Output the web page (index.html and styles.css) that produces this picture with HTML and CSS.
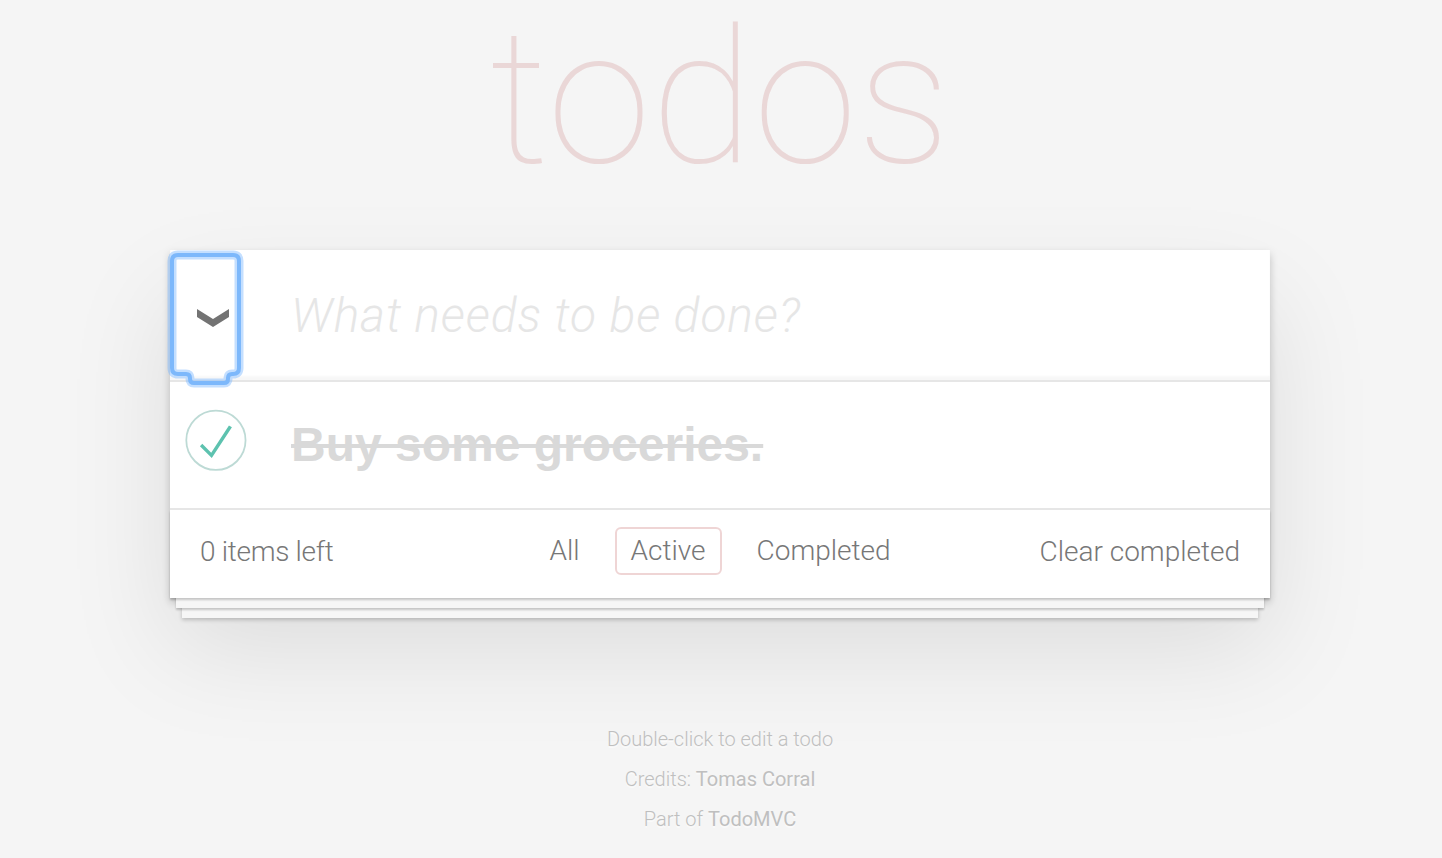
FILE: index.html
```html
<!DOCTYPE html>
<html lang="en">
<head>
<meta charset="utf-8">
<title>Backbone.js • TodoMVC</title>
<link rel="stylesheet" href="styles.css">
</head>
<body>
<div class="page">
  <h1 class="title">todos</h1>
  <section class="todoapp">
    <header class="new-row">
      <div class="toggle-all">
        <svg class="chevron" width="32" height="20" viewBox="0 0 32 20"><polygon points="0,1 16,11 32,1 32,9 16,19 0,9" fill="#737373"/></svg>
      </div>
      <input class="new-todo" placeholder="What needs to be done?">
      <svg class="focus-ring" width="84" height="142" viewBox="0 0 84 142">
        <path d="M13,7 H68 Q74,7 74,13 V120 Q74,126 68,126 H67 Q63,126 63,130 V131 Q63,135 59,135 H29 Q25,135 25,131 V130 Q25,126 21,126 H13 Q7,126 7,120 V13 Q7,7 13,7 Z" fill="none" stroke="rgba(125,185,255,0.45)" stroke-width="9"/>
        <path d="M13,7 H68 Q74,7 74,13 V120 Q74,126 68,126 H67 Q63,126 63,130 V131 Q63,135 59,135 H29 Q25,135 25,131 V130 Q25,126 21,126 H13 Q7,126 7,120 V13 Q7,7 13,7 Z" fill="none" stroke="#7db8fb" stroke-width="4"/>
      </svg>
    </header>
    <ul class="todo-list">
      <li class="todo completed">
        <svg class="check" width="80" height="80" viewBox="-10 -18 100 135"><circle cx="50" cy="50" r="50" fill="none" stroke="#bddad5" stroke-width="3"/><path fill="#5dc2af" d="M72 25L42 71 27 56l-4 4 20 20 34-52z"/></svg>
        <label class="todo-label">Buy some groceries.</label>
      </li>
    </ul>
    <footer class="footer">
      <span class="count">0 items left</span>
      <ul class="filters">
        <li><a class="filter">All</a></li>
        <li><a class="filter selected">Active</a></li>
        <li><a class="filter">Completed</a></li>
      </ul>
      <button class="clear">Clear completed</button>
    </footer>
  </section>
  <footer class="info">
    <p>Double-click to edit a todo</p>
    <p>Credits: <a>Tomas Corral</a></p>
    <p>Part of <a>TodoMVC</a></p>
  </footer>
</div>
</body>
</html>
```
FILE: styles.css
```css
* { box-sizing: border-box; }
html, body { margin: 0; padding: 0; }
body {
  background: #f5f5f5;
  font-family: "Roboto", "Liberation Sans", sans-serif;
  font-weight: 300;
  color: #4d4d4d;
}
.page {
  width: 1102px;
  padding-right: 2px;
  margin: 0 auto;
}
.title {
  margin: 0;
  height: 250px;
  font-size: 188px;
  line-height: 196px;
  font-weight: 100;
  text-align: center;
  color: rgba(175, 47, 47, 0.15);
}
.todoapp {
  background: #fff;
  box-shadow: 0 4px 8px 0 rgba(0, 0, 0, 0.2), 0 50px 100px 0 rgba(0, 0, 0, 0.1);
}
.new-row {
  position: relative;
  display: flex;
  height: 132px;
  border-bottom: 2px solid #e6e6e6;
  box-shadow: inset 0 -4px 2px rgba(0, 0, 0, 0.03);
}
.toggle-all {
  width: 86px;
  display: flex;
  align-items: center;
  justify-content: center;
  padding-top: 6px;
}
.new-todo {
  flex: 1;
  border: none;
  outline: none;
  background: transparent;
  padding: 0 32px 0 35px;
  font-family: "Roboto", "Liberation Sans", sans-serif;
  font-size: 48px;
  font-weight: 300;
  font-style: italic;
  letter-spacing: 0.9px;
  color: #4d4d4d;
}
.new-todo::placeholder {
  color: #e6e6e6;
  font-style: italic;
  font-weight: 300;
}
.focus-ring {
  position: absolute;
  left: -5px;
  top: -2px;
}
.todo-list {
  list-style: none;
  margin: 0;
  padding: 0;
}
.todo {
  display: flex;
  align-items: flex-start;
  height: 126px;
}
.check {
  margin-top: 18px;
  flex: none;
}
.todo-label {
  padding-left: 41px;
  font-family: "Liberation Sans", Arial, sans-serif;
  font-weight: 700;
  font-size: 48px;
  line-height: 126px;
  color: #d9d9d9;
  text-decoration: line-through;
}
.footer {
  position: relative;
  height: 90px;
  border-top: 2px solid #e6e6e6;
  padding: 0 30px 6px;
  display: grid;
  grid-template-columns: 1fr auto 1fr;
  align-items: center;
  color: #777;
  font-size: 28px;
}
.footer::before {
  content: '';
  position: absolute;
  left: 0;
  right: 0;
  top: 0;
  bottom: 0;
  box-shadow: 0 2px 2px rgba(0, 0, 0, 0.2),
    0 16px 0 -6px #f6f6f6,
    0 18px 2px -6px rgba(0, 0, 0, 0.2),
    0 32px 0 -12px #f6f6f6,
    0 34px 4px -12px rgba(0, 0, 0, 0.2);
  pointer-events: none;
}
.count { justify-self: start; letter-spacing: -0.3px; }
.filters {
  list-style: none;
  margin: 0;
  padding: 0;
  display: flex;
  gap: 19px;
}
.filter {
  display: block;
  padding: 6px 14px;
  line-height: 32px;
  border: 2px solid transparent;
  border-radius: 6px;
  color: inherit;
}
.filter.selected {
  border-color: rgba(175, 47, 47, 0.2);
}
.clear {
  justify-self: end;
  border: none;
  background: none;
  padding: 0;
  font: inherit;
  color: inherit;
}
.info {
  margin-top: 131px;
  text-align: center;
  color: #bfbfbf;
  font-size: 20px;
  text-shadow: 0 2px 0 rgba(255, 255, 255, 0.5);
}
.info p {
  margin: 0 0 20px;
  line-height: 20px;
}
.info a {
  font-weight: 400;
}
```
